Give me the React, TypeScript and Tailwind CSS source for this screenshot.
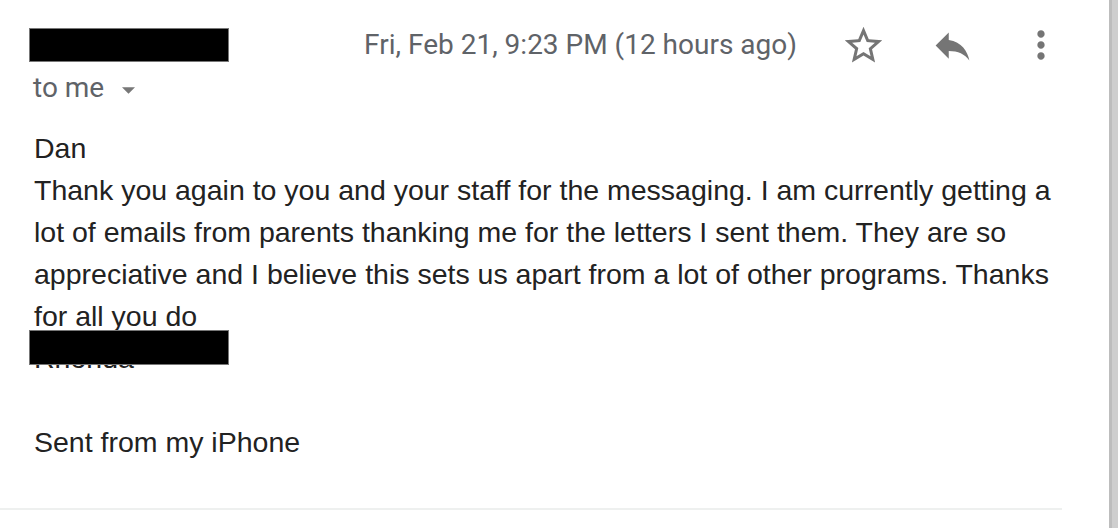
export default function App() {
  return (
    <div className="flex h-[528px] w-[1118px] overflow-hidden bg-white">
      <div className="relative flex flex-1 flex-col">
        {/* header */}
        <div className="flex items-start pl-[29px] pt-[28px]">
          <div className="flex flex-col">
            <div className="h-[34px] w-[200px] border border-[#777] bg-black" />
            <div className="mt-[9px] flex items-center pl-[4px] font-['Roboto',sans-serif] text-[28px] leading-[34px] text-[#5f6368]">
              <span>to me</span>
              <svg viewBox="0 0 10 5" className="ml-[18px] mt-[4px] h-[7px] w-[13px] fill-[#777]">
                <path d="M0 0l5 5 5-5z" />
              </svg>
            </div>
          </div>
          <div className="ml-auto mr-[46px] flex h-[34px] items-center">
            <span className="font-['Roboto',sans-serif] text-[28px] text-[#5f6368]">
              Fri, Feb 21, 9:23 PM (12 hours ago)
            </span>
            <div className="ml-[44px] flex items-center gap-[44px]">
              <svg viewBox="0 0 24 24" className="h-[45px] w-[45px] fill-[#757575]">
                <path d="M22 9.24l-7.19-.62L12 2 9.19 8.63 2 9.24l5.46 4.73L5.82 21 12 17.27 18.18 21l-1.63-7.03L22 9.24zM12 15.4l-3.76 2.27 1-4.28-3.32-2.88 4.38-.38L12 6.1l1.71 4.04 4.38.38-3.32 2.88 1 4.28L12 15.4z" />
              </svg>
              <svg viewBox="0 0 24 24" className="h-[45px] w-[45px] fill-[#757575]">
                <path d="M10 9V5l-7 7 7 7v-4.1c5 0 8.5 1.6 11 5.1-1-5-4-10-11-11z" />
              </svg>
              <svg viewBox="0 0 24 24" className="h-[44px] w-[44px] fill-[#757575]">
                <path d="M12 8c1.1 0 2-.9 2-2s-.9-2-2-2-2 .9-2 2 .9 2 2 2zm0 2c-1.1 0-2 .9-2 2s.9 2 2 2 2-.9 2-2-.9-2-2-2zm0 6c-1.1 0-2 .9-2 2s.9 2 2 2 2-.9 2-2-.9-2-2-2z" />
              </svg>
            </div>
          </div>
        </div>

        {/* body */}
        <div className="relative mt-[22px] w-[1070px] pl-[34px] font-['Liberation_Sans',Arial,sans-serif] text-[28.5px] leading-[42px] text-[#222]">
          <div>Dan</div>
          <div>
            Thank you again to you and your staff for the messaging. I am currently getting a lot of emails from
            parents thanking me for the letters I sent them. They are so appreciative and I believe this sets us
            apart from a lot of other programs. Thanks for all you do
          </div>
          <div className="relative">
            Rhonda
            <div className="absolute left-[-5px] top-[-7px] h-[35px] w-[200px] border border-[#777] bg-black" />
          </div>
          <div className="h-[42px]" />
          <div>Sent from my iPhone</div>
        </div>

        <div className="mt-auto mb-[18px] h-[2px] w-[1062px] bg-[#eef0ef]" />
      </div>
      <div className="h-full w-[9px] border-l-[3px] border-[#bdbdbd] bg-[#cecece]" />
    </div>
  );
}
